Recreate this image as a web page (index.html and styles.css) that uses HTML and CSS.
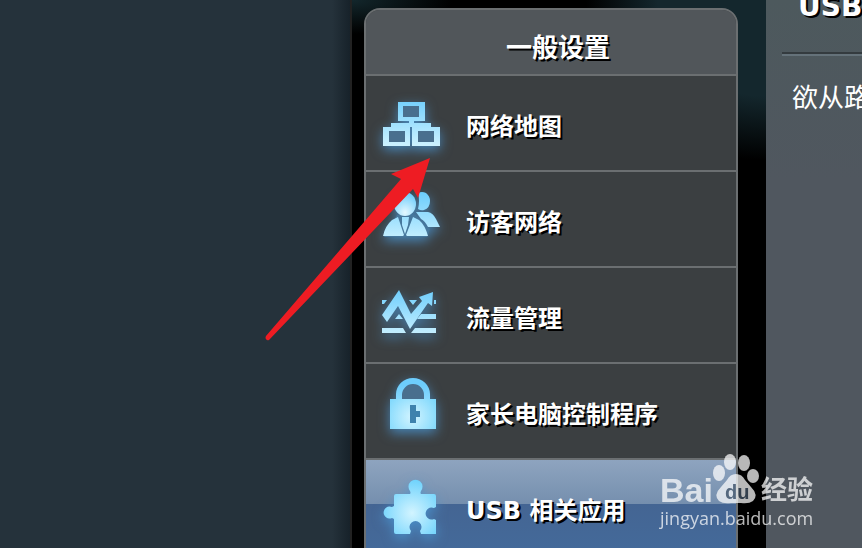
FILE: index.html
```
<!DOCTYPE html>
<html lang="zh-CN">
<head>
    <meta charset="UTF-8">
    <meta name="viewport" content="width=device-width, initial-scale=1.0">
    <title>USB 相关应用</title>
    <link rel="stylesheet" href="styles.css">
</head>
<body>
    <div class="page">
        <div class="backdrop"></div>

        <div class="sidebar">
            <nav class="menu" aria-labelledby="menu-title">
                <h2 id="menu-title" class="menu-title">一般设置</h2>

                <a class="menu-item" href="#map">
                    <svg class="icon" viewBox="0 0 72 72" aria-hidden="true">
                        <defs>
                            <linearGradient id="glow" gradientUnits="userSpaceOnUse" x1="0" y1="10" x2="0" y2="58">
                                <stop offset="0" stop-color="#6dcdfc"/>
                                <stop offset="1" stop-color="#cbf1ff"/>
                            </linearGradient>
                            <radialGradient id="shine" gradientUnits="userSpaceOnUse" cx="37" cy="42" r="34">
                                <stop offset="0" stop-color="#d2f4ff"/>
                                <stop offset="1" stop-color="#6dd2fc"/>
                            </radialGradient>
                            <radialGradient id="face" cx="0.5" cy="0.85" r="0.8">
                                <stop offset="0" stop-color="#e4f8ff"/>
                                <stop offset="1" stop-color="#6dcdfc"/>
                            </radialGradient>
                        </defs>
                        <path fill="#496f8e" d="M27 18h18v13H27zM13 43h18v13H13zM42 43h18v13H42z"/>
                        <path fill="url(#glow)" fill-rule="evenodd" d="M23 15h27v19H39v2h17v4h9v19H37V40h-2v19H8V40h8v-4h18v-2H23zM28 19v11h16V19zM14 44v11h16V44zM43 44v11h16V44z"/>
                    </svg>
                    <span>网络地图</span>
                </a>

                <a class="menu-item" href="#guest">
                    <svg class="icon" viewBox="0 0 72 72" aria-hidden="true">
                        <path fill="#46779c" d="M22 32h19l3 4 11 10-3 8H9z"/>
                        <path fill="url(#glow)" d="M43 10q4-2 8 0 4 3 4 8 0 7-6 9-3 1-6-1 2-8 0-16z"/>
                        <path fill="url(#glow)" d="M41 29h12q5 1 8 7l4 8H53q-3-6-7-8z"/>
                        <ellipse fill="url(#face)" cx="30" cy="21" rx="11" ry="12"/>
                        <path fill="url(#glow)" d="M23 34l6 18-1 1H8q2-10 9-16zM38 34l6 3q6 5 9 16H32l-1-1zM27 34h7l-1 8-3 9-3-9z"/>
                    </svg>
                    <span>访客网络</span>
                </a>

                <a class="menu-item" href="#traffic">
                    <svg class="icon" viewBox="0 0 72 72" aria-hidden="true">
                        <path fill="url(#glow)" d="M7 21h5l-3 4H7zM34 21h8l-4 5zM59 21h2v4h-2zM20 40l4-5 4 5zM46 35h15v5H42zM7 49h21l3 5H7zM40 49h21v5H36z"/>
                        <path fill="url(#glow)" d="M24 11l12 24 11-13-3-4 14-5-1 14-4-3-18 26-12-23-11 16-5-7z"/>
                    </svg>
                    <span>流量管理</span>
                </a>

                <a class="menu-item" href="#parental">
                    <svg class="icon" viewBox="0 0 72 72" aria-hidden="true">
                        <path fill="#496f8e" d="M27 25V18a11 9 0 0 1 22 0v7z"/>
                        <path fill="url(#glow)" d="M21 25V19a17 16 0 0 1 34 0v6h-6v-5a11 11 0 0 0-22 0v5z"/>
                        <path fill="url(#shine)" d="M15 24h46v30H15z"/>
                        <path fill="#3e82ad" d="M35 30h6v6h4v6h-4v6h-6z"/>
                    </svg>
                    <span>家长电脑控制程序</span>
                </a>

                <a class="menu-item active" href="#usb" aria-current="page">
                    <svg class="icon" viewBox="0 0 72 72" aria-hidden="true">
                        <path fill="url(#shine)" d="M21 23h14q1-1 0-3a7 7 0 1 1 11 0q-1 2 0 3h13q2 0 2 2v11l-2 1a6 6 0 1 0 0 11l2 1v14H46l-1-3a6 6 0 1 0-9 0l-1 3H21q-2 0-2-2V48l-2-1a6 6 0 1 1 0-11l2-1V25q0-2 2-2z"/>
                    </svg>
                    <span>USB 相关应用</span>
                </a>
            </nav>

            <!-- Pointer to the first menu entry -->
            <svg class="arrow" viewBox="0 0 166 184" aria-hidden="true">
                <path fill="#ee1c23" d="M165 1l-12 40-5-9L4 183q-2 1-3-1-1-1 0-3L136 22l-10-5z"/>
            </svg>

            <div class="watermark">
                <div class="brand">
                    <span class="brand-name">Bai</span>
                    <svg class="paw" viewBox="0 0 46 52" aria-hidden="true">
                        <ellipse cx="6" cy="19" rx="6" ry="8"/>
                        <ellipse cx="17" cy="8" rx="6" ry="8"/>
                        <ellipse cx="31" cy="9" rx="6" ry="8"/>
                        <ellipse cx="40" cy="22" rx="6" ry="7"/>
                        <path d="M23 20q6 0 9 6l6 7q8 8 2 14-4 3-12 2h-10q-8 1-12-2-6-6 2-14l6-7q3-6 9-6z"/>
                        <text x="12" y="45">du</text>
                    </svg>
                    <span class="brand-sub">经验</span>
                </div>
                <div class="site">jingyan.baidu.com</div>
            </div>
        </div>

        <main class="content">
            <h1>USB</h1>
            <p>欲从路由器</p>
        </main>
    </div>
</body>
</html>
```

FILE: styles.css
```
* {
    box-sizing: border-box;
}
body {
    margin: 0;
    font-family: "DejaVu Sans", "Noto Sans CJK SC", sans-serif;
    color: #fff;
    background-color: #000;
}
.page {
    display: grid;
    grid-template-columns: minmax(0, 11fr) auto minmax(0, 3fr);
    height: 100vh;
    overflow: hidden;
}
.backdrop {
    background: linear-gradient(to left, #17222a 0, #25323b 18px);
    border-right: 2px solid #222;
}
.sidebar {
    position: relative;
    padding: 8px 28px 0 12px;
    background:
        radial-gradient(ellipse 100px 34px at 0 0, #13272c, transparent),
        radial-gradient(ellipse 180px 160px at 100% 0, #14272d 60%, transparent),
        #000;
}
.menu {
    width: 374px;
    border: 2px solid #6b6f71;
    border-radius: 16px 16px 0 0;
    background-color: #3b3f41;
    overflow: hidden;
}
.menu-title {
    margin: 0;
    height: 66px;
    padding: 8px 0 0 14px;
    border-bottom: 2px solid #6b6f71;
    background-color: #51565a;
    font-size: 26px;
    line-height: 60px;
    text-align: center;
    text-shadow: 2px 2px 0 #000;
}
.menu-item {
    display: flex;
    align-items: center;
    gap: 19px;
    height: 96px;
    padding-left: 9px;
    border-bottom: 2px solid #6b6f71;
    color: #fff;
    font-size: 24px;
    font-weight: bold;
    line-height: 36px;
    text-decoration: none;
    text-shadow: 2px 2px 0 #000;
}
.menu-item span {
    padding-top: 7px;
}
.menu-item.active {
    background: linear-gradient(#8ea4bf 0, #758fae 44px, #446593 44px, #446a9a 100%);
}
.icon {
    flex: none;
    width: 72px;
    height: 72px;
    overflow: visible;
    filter: drop-shadow(0 4px 6px rgba(75, 150, 210, 0.8));
}
.arrow {
    position: absolute;
    top: 157px;
    left: -87px;
    width: 166px;
    height: 184px;
}
.content {
    padding: 0 0 0 16px;
    background: linear-gradient(#4d595d, #50575f 180px);
    white-space: nowrap;
    overflow: hidden;
}
.content h1 {
    margin: 0;
    height: 54px;
    padding-left: 16px;
    border-bottom: 2px solid #343b3f;
    box-shadow: 0 2px 0 #65727a;
    font-size: 28px;
    line-height: 14px;
    text-shadow: 2px 2px 0 #000;
}
.content p {
    margin: 26px 0 0;
    padding-left: 10px;
    font-size: 26px;
    line-height: 36px;
}
/* Watermark over the lower right corner */
.watermark {
    position: absolute;
    left: 308px;
    top: 456px;
    color: #fff;
    opacity: 0.72;
    white-space: nowrap;
}
.brand {
    display: flex;
    align-items: flex-end;
    height: 50px;
}
.brand-name {
    font-family: "Liberation Sans", sans-serif;
    font-size: 34px;
    font-weight: bold;
    line-height: 32px;
}
.paw {
    width: 46px;
    height: 52px;
    fill: #fff;
}
.paw text {
    font: bold 20px "Liberation Sans", sans-serif;
    fill: #47586b;
}
.brand-sub {
    padding-left: 2px;
    font-size: 26px;
    font-weight: bold;
    line-height: 32px;
}
.site {
    font-family: "Open Sans", sans-serif;
    font-size: 18px;
    line-height: 24px;
}
```
